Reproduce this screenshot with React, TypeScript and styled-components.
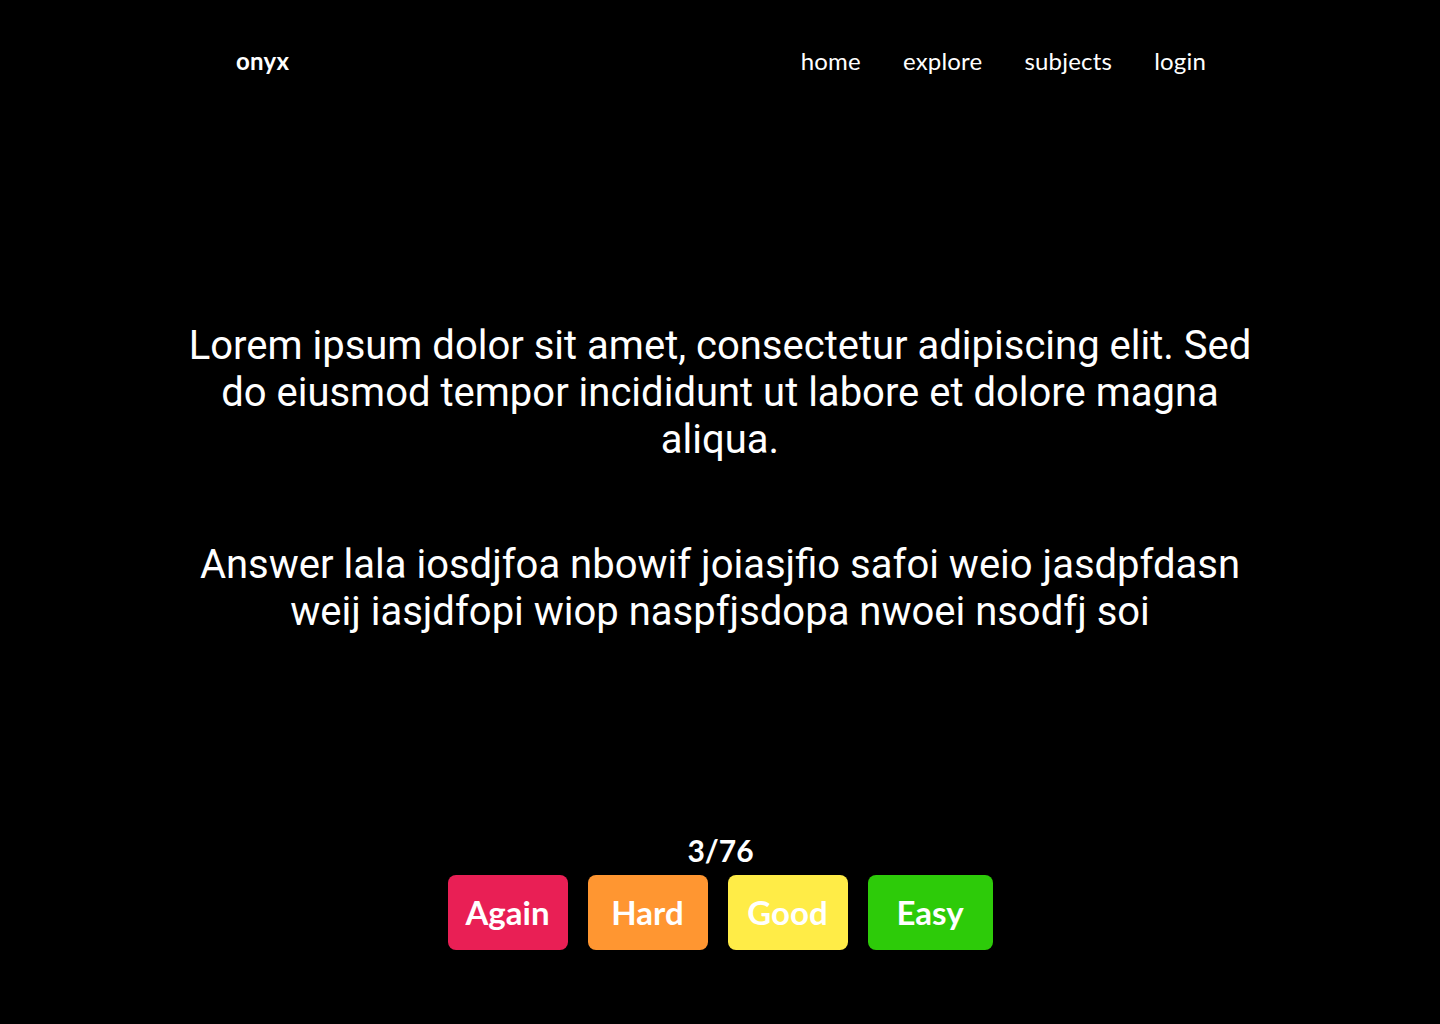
import React from "react";
import styled, { createGlobalStyle } from "styled-components";

const Global = createGlobalStyle`
  html, body { margin: 0; padding: 0; background: #000; }
  body { font-family: Lato, "Open Sans", sans-serif; color: #fff; }
  * { box-sizing: border-box; }
`;

const Page = styled.div`
  min-height: 1024px;
  background: #000;
  display: flex;
  flex-direction: column;
`;

const Header = styled.header`
  height: 120px;
  display: flex;
  align-items: center;
  justify-content: space-between;
  padding: 0 234px 0 236px;
`;

const Logo = styled.div`
  font-family: Lato, sans-serif;
  font-weight: 700;
  font-size: 24px;
  letter-spacing: 0.3px;
`;

const Nav = styled.nav`
  display: flex;
  gap: 42px;
`;

const NavLink = styled.a`
  font-family: Lato, sans-serif;
  font-size: 24px;
  color: #fff;
  text-decoration: none;
  letter-spacing: 0.2px;
`;

const Card = styled.main`
  display: flex;
  flex-direction: column;
  align-items: center;
  gap: 78px;
  padding-top: 202px;
  width: 1080px;
  margin: 0 auto;
`;

const CardText = styled.p`
  margin: 0;
  font-family: Roboto, sans-serif;
  font-size: 40px;
  line-height: 47px;
  text-align: center;
`;

const Footer = styled.footer`
  margin-top: auto;
  padding-bottom: 74px;
  display: flex;
  flex-direction: column;
  align-items: center;
  gap: 8px;
`;

const Counter = styled.div`
  font-family: Lato, sans-serif;
  font-weight: 700;
  font-size: 30px;
  line-height: 34px;
  margin-left: 1px;
`;

const Buttons = styled.div`
  display: flex;
  gap: 20px;
`;

const RateButton = styled.button<{ $bg: string; $width: number }>`
  width: ${(p) => p.$width}px;
  height: 75px;
  padding: 0;
  border: none;
  border-radius: 8px;
  background: ${(p) => p.$bg};
  color: #fff;
  font-family: Lato, sans-serif;
  font-weight: 700;
  font-size: 33px;
  line-height: 1;
  cursor: pointer;
`;

const ratings = [
  { label: "Again", bg: "#e91f55", width: 120 },
  { label: "Hard", bg: "#ff9631", width: 120 },
  { label: "Good", bg: "#ffec47", width: 120 },
  { label: "Easy", bg: "#2dcb09", width: 125 },
];

export default function App() {
  return (
    <Page>
      <Global />
      <Header>
        <Logo>onyx</Logo>
        <Nav>
          <NavLink href="#">home</NavLink>
          <NavLink href="#">explore</NavLink>
          <NavLink href="#">subjects</NavLink>
          <NavLink href="#">login</NavLink>
        </Nav>
      </Header>
      <Card>
        <CardText>
          Lorem ipsum dolor sit amet, consectetur adipiscing elit. Sed do eiusmod tempor incididunt ut labore et dolore magna aliqua.
        </CardText>
        <CardText>
          Answer lala iosdjfoa nbowif joiasjfio safoi weio jasdpfdasn weij iasjdfopi wiop naspfjsdopa nwoei nsodfj soi
        </CardText>
      </Card>
      <Footer>
        <Counter>3/76</Counter>
        <Buttons>
          {ratings.map((r) => (
            <RateButton key={r.label} $bg={r.bg} $width={r.width}>
              {r.label}
            </RateButton>
          ))}
        </Buttons>
      </Footer>
    </Page>
  );
}
